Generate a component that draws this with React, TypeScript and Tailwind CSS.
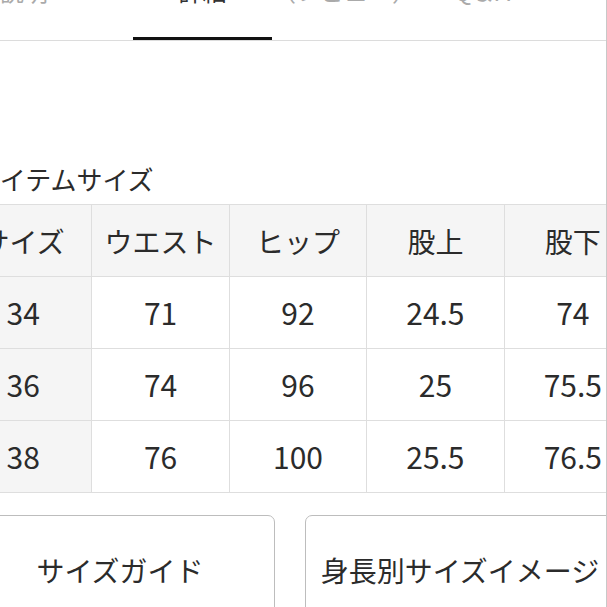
const TABS = [
  { label: "説明", w: "w-[133px]", align: "justify-start", active: false },
  { label: "詳細", w: "w-[139px]", align: "justify-center", active: true },
  { label: "（レビュー）", w: "w-[140px]", align: "justify-center", active: false },
  { label: "Q＆A", w: "w-[140px]", align: "justify-center", active: false },
]

const HEAD = ["サイズ", "ウエスト", "ヒップ", "股上", "股下"]

const ROWS = [
  ["34", "71", "92", "24.5", "74"],
  ["36", "74", "96", "25", "75.5"],
  ["38", "76", "100", "25.5", "76.5"],
]

export default function App() {
  return (
    <div
      className="relative h-[607px] w-[607px] overflow-hidden border-r border-[#c8c8c8] bg-white text-[#2b2b2b]"
      style={{ fontFamily: '"Noto Sans CJK JP", "Noto Sans", sans-serif' }}
    >
      {/* tabs, cut off at the top */}
      <div className="-mt-[32px] flex border-b border-[#dcdcdc]">
        {TABS.map((t) => (
          <div
            key={t.label}
            className={`${t.w} ${t.align} flex h-[72px] shrink-0 items-start pt-[6px] text-[24px] leading-[34px] ${
              t.active ? "border-b-[3px] border-[#111] text-[#333]" : "border-b-[3px] border-transparent text-[#aaa]"
            }`}
          >
            {t.label}
          </div>
        ))}
      </div>

      <div className="-ml-[46px] pt-[118px]">
        <div className="pl-[21px] text-[26px] leading-[40px] text-[#2b2b2b]">アイテムサイズ</div>

        <div className="mt-[5px] grid w-[688px] grid-cols-5 border-t border-l border-[#dedede]">
          {HEAD.map((h) => (
            <div
              key={h}
              className="flex h-[72px] items-center justify-center border-r border-b border-[#dedede] bg-[#f5f5f5] text-[28px]"
            >
              {h}
            </div>
          ))}
          {ROWS.map((r) =>
            r.map((v, i) => (
              <div
                key={r[0] + i}
                className={`flex h-[72px] items-center justify-center border-r border-b border-[#dedede] text-[30px] ${
                  i === 0 ? "bg-[#f5f5f5]" : "bg-white"
                }`}
              >
                {v}
              </div>
            ))
          )}
        </div>
      </div>

      <div className="-ml-[35px] mt-[22px] flex gap-[30px]">
        <div className="flex h-[110px] w-[310px] shrink-0 items-start justify-center rounded-[7px] border border-[#bdbdbd] pt-[33px] text-[28px]">
          サイズガイド
        </div>
        <div className="flex h-[110px] w-[310px] shrink-0 items-start justify-center rounded-[7px] border border-[#bdbdbd] pt-[33px] text-[28px]">
          身長別サイズイメージ
        </div>
      </div>
    </div>
  )
}
